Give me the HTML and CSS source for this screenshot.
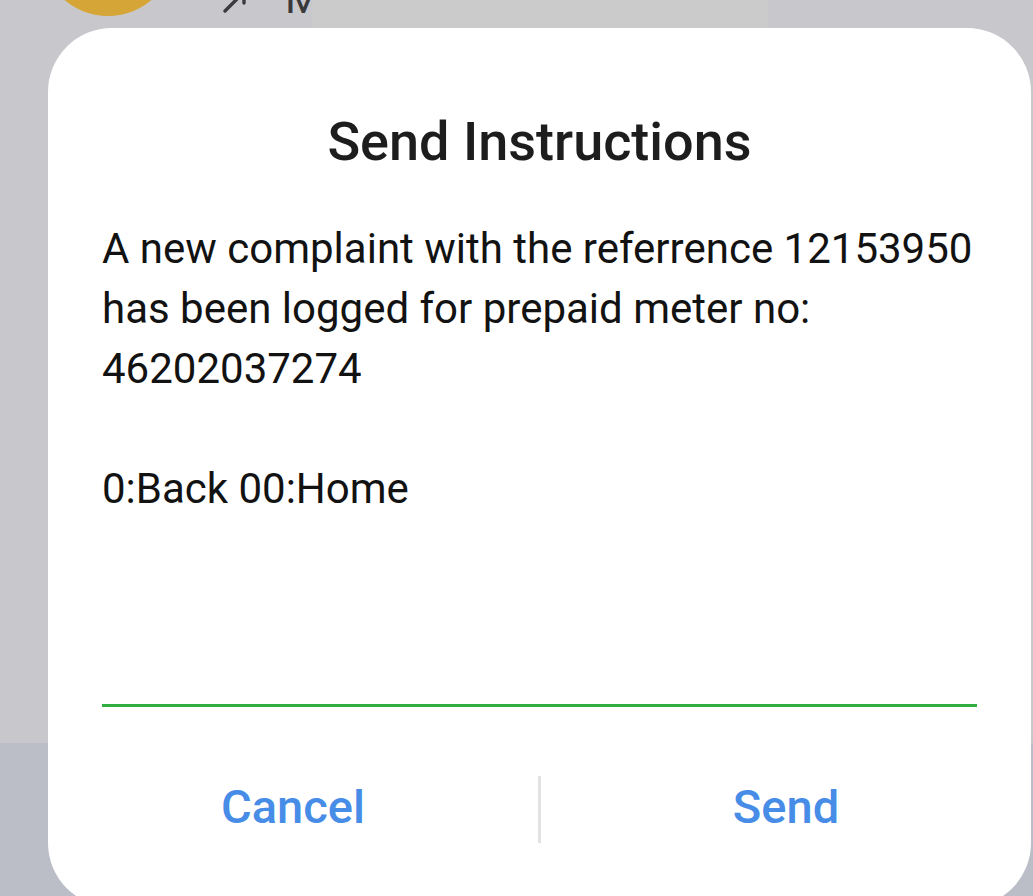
FILE: index.html
```html
<!DOCTYPE html>
<html lang="en">
<head>
<meta charset="utf-8">
<title>Send Instructions</title>
<link rel="stylesheet" href="styles.css">
</head>
<body>
  <div class="backdrop">
    <div class="avatar"></div>
    <svg class="call-icon" width="30" height="34" viewBox="0 0 30 34" aria-hidden="true">
      <path d="M3 31 L22 12 M10 8 H22 V23" fill="none" stroke="#3b3b3e" stroke-width="3.4" stroke-linecap="round" stroke-linejoin="round"/>
    </svg>
    <div class="contact-name"><span>M</span></div>
    <div class="backdrop-panel"></div>
  </div>

  <div class="dialog">
    <h1 class="dialog-title">Send Instructions</h1>
    <p class="dialog-message">A new complaint with the referrence 12153950<br>has been logged for prepaid meter no:<br>46202037274</p>
    <p class="dialog-message dialog-options">0:Back 00:Home</p>
    <div class="dialog-input"></div>
    <div class="dialog-actions">
      <div class="action">Cancel</div>
      <div class="action-divider"></div>
      <div class="action">Send</div>
    </div>
  </div>
</body>
</html>
```
FILE: styles.css
```css
html, body {
  margin: 0;
  padding: 0;
}

body {
  width: 1033px;
  height: 896px;
  overflow: hidden;
  font-family: Roboto, "Noto Sans", "Liberation Sans", sans-serif;
  background: linear-gradient(to bottom, #c8c8cc 0, #c8c8cc 743px, #bbbdc7 743px, #bbbdc7 100%);
}

.backdrop {
  height: 28px;
  display: flex;
  align-items: flex-start;
  overflow: hidden;
}

.avatar {
  flex: none;
  width: 134px;
  height: 134px;
  margin-top: -118px;
  margin-left: 41px;
  border-radius: 50%;
  background: #d5a637;
}

.call-icon {
  flex: none;
  margin-left: 47px;
  margin-top: -20px;
}

.contact-name {
  flex: none;
  width: 27px;
  margin-left: 33px;
  margin-top: -27px;
  overflow: hidden;
  color: #39393b;
  font-size: 42px;
  line-height: 51px;
}

.backdrop-panel {
  flex: none;
  width: 456px;
  height: 28px;
  background: #cbcbcb;
}

.dialog {
  width: 983px;
  height: 879px;
  margin-left: 48px;
  box-sizing: border-box;
  padding: 82px 54px 0;
  background: #ffffff;
  border-radius: 64px;
  display: flex;
  flex-direction: column;
}

.dialog-title {
  margin: 0;
  font-size: 54px;
  line-height: 64px;
  font-weight: 500;
  text-align: center;
  color: #1d1d1d;
}

.dialog-message {
  margin: 45px 0 0;
  font-size: 42px;
  line-height: 60px;
  font-weight: 400;
  color: #121212;
  white-space: nowrap;
}

.dialog-options {
  margin-top: 60px;
}

.dialog-input {
  height: 185px;
  border-bottom: 3px solid #30ae42;
}

.dialog-actions {
  margin: 69px -54px 0;
  height: 67px;
  display: flex;
  align-items: center;
}

.action {
  flex: 1;
  text-align: center;
  font-size: 47px;
  line-height: 67px;
  font-weight: 500;
  color: #478de7;
  margin-top: -6px;
}

.action-divider {
  flex: none;
  width: 3px;
  height: 67px;
  background: #e2e2e2;
}
```
